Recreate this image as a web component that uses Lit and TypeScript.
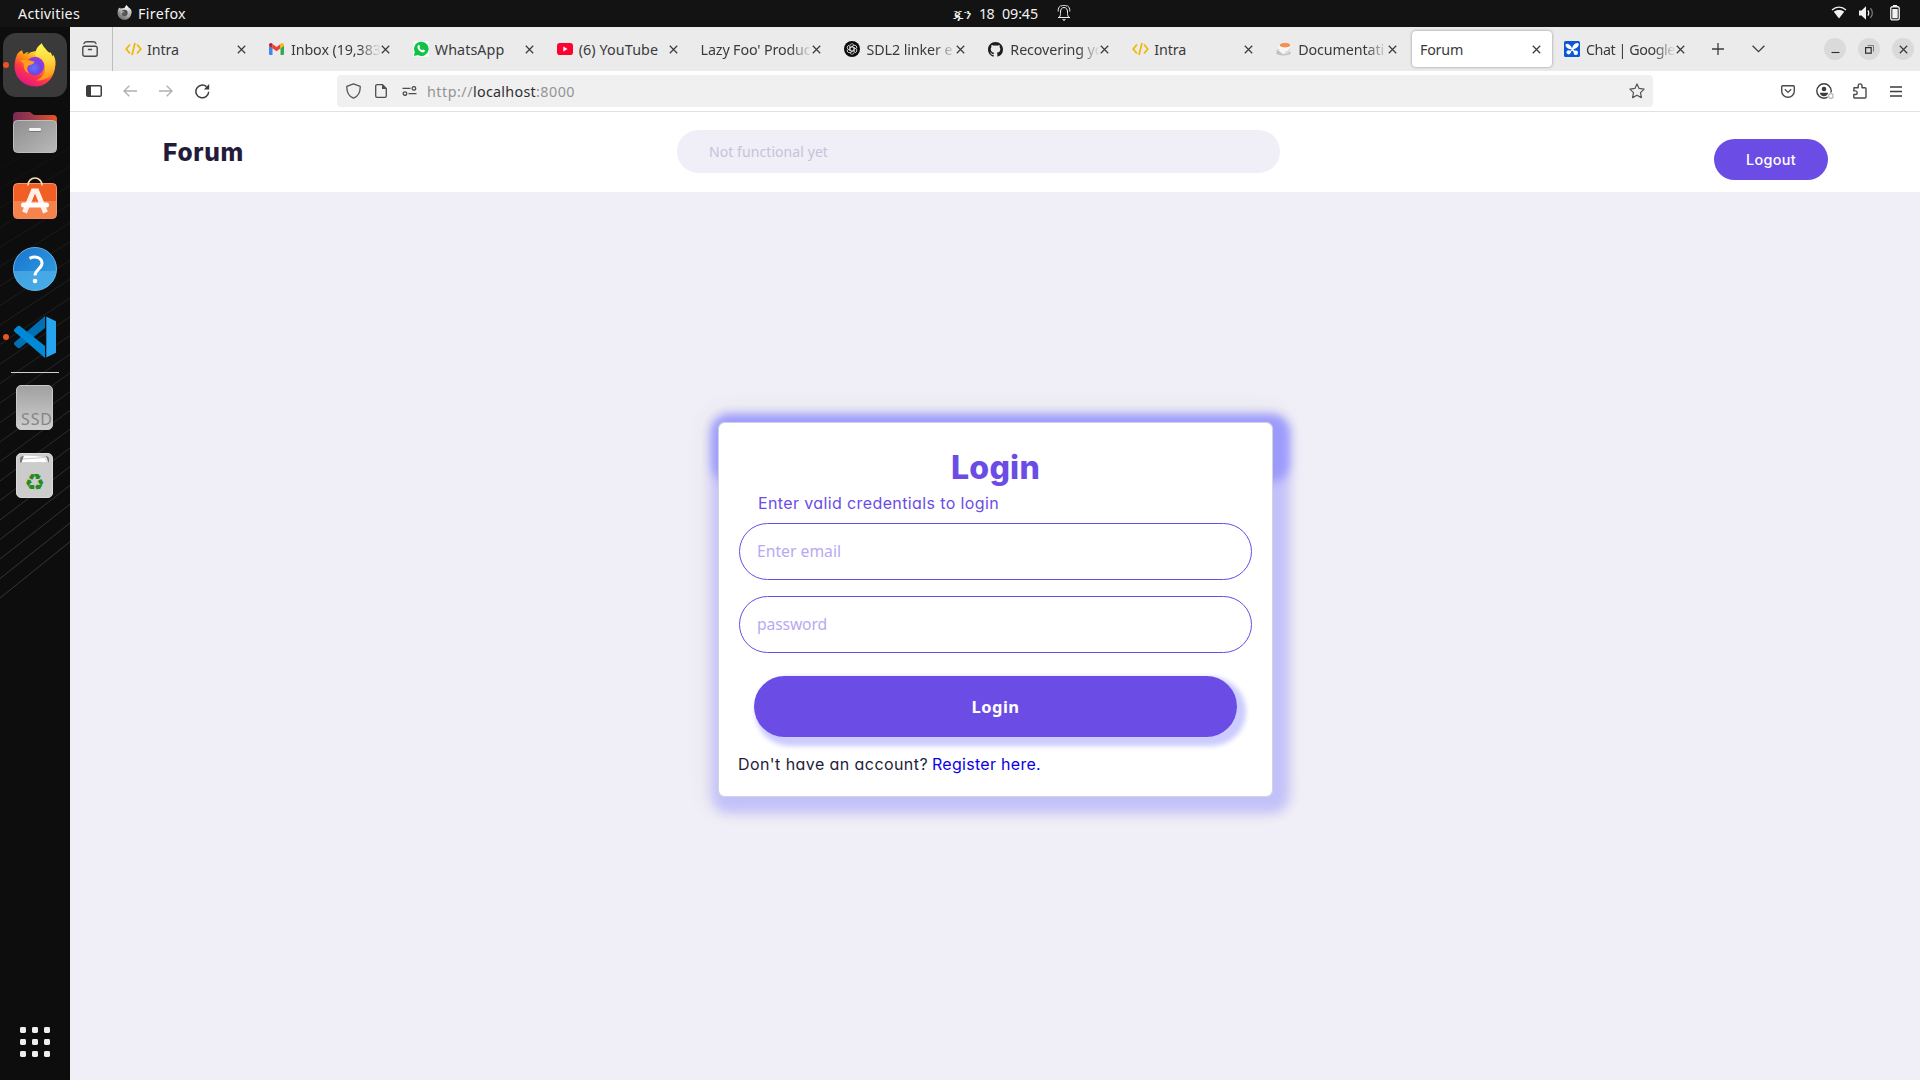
import { LitElement, html, svg, css, nothing } from "lit";
import { customElement, property } from "lit/decorators.js";

/** Inline text whose tracking is adjusted so that it fills a given width. */
@customElement("fit-text")
class FitText extends LitElement {
  static styles = css`
    :host { display: inline-block; white-space: pre; }
    .t { display: inline-block; }
  `;
  @property({ type: Number }) w = 0;
  @property() text = "";
  firstUpdated() {
    const el = this.renderRoot.querySelector<HTMLElement>(".t")!;
    const natural = el.getBoundingClientRect().width;
    const gap = (this.w - natural) / this.text.length;
    el.style.letterSpacing = `${gap.toFixed(3)}px`;
  }
  render() {
    return html`<span class="t">${this.text}</span>`;
  }
}

const foxShapes = (p: string, grey = false) => svg`
  <defs>
    <linearGradient id="${p}a" x1=".8" y1=".1" x2=".25" y2=".95">
      <stop offset="0" stop-color="${grey ? "#eee" : "#fff44f"}"/>
      <stop offset=".35" stop-color="${grey ? "#c4c4c4" : "#ff980e"}"/>
      <stop offset=".65" stop-color="${grey ? "#8c8c8c" : "#ff3647"}"/>
      <stop offset="1" stop-color="${grey ? "#777" : "#e31587"}"/>
    </linearGradient>
    <linearGradient id="${p}b" x1=".5" y1="0" x2=".6" y2="1">
      <stop offset="0" stop-color="${grey ? "#fff" : "#fff44f"}"/>
      <stop offset=".5" stop-color="${grey ? "#ccc" : "#ffd43c"}"/>
      <stop offset="1" stop-color="${grey ? "#999" : "#ff8a16"}"/>
    </linearGradient>
    <radialGradient id="${p}c" cx=".45" cy=".6" r=".6">
      <stop offset="0" stop-color="${grey ? "#666" : "#6173ff"}"/>
      <stop offset=".6" stop-color="${grey ? "#4c4c4c" : "#7542e5"}"/>
      <stop offset="1" stop-color="${grey ? "#555" : "#a238d8"}"/>
    </radialGradient>
  </defs>
  <path fill="url(#${p}a)" d="M2.300 13.500C3 10.500 5 8.500 8.200 7.200 8.500 9 9.200 10.500 9.800 11.200 11 10 12.500 9.300 14.600 9L12 13C14 10 20 7 26 9 31 5 38 10 40 16 44 28 36 43.500 21.500 43.500 9 43.500 .3 34 .6 23 .7 19 1.300 16 2.300 13.500Z"/>
  <path fill="url(#${p}b)" d="M27.800.3C22.500 4 20.500 9 22 13.500 28 15 32 20 31 27 30 33 26 36 22 37.500 33 38.500 41 31 41.500 21.500 41.800 18 41 14.500 39.300 11.800L38.400 14.300C38 12 37.300 10.200 36.300 9L35.500 11.500C33.500 7 29 4 27.800.3Z"/>
  <circle cx="21" cy="23" r="9.300" fill="url(#${p}c)"/>
  <path fill="${grey ? "#aaa" : "#ff9a1c"}" d="M6.500 17.500C10 15.800 15 17 20.500 18.500 19.800 21.500 16 22 14.800 22.500 12.500 24 13 28 15.500 30.500 11 29 9 25 10 21Z"/>
`;

const I = {
  fox: svg`<svg width="42" height="44" viewBox="0 0 42 44">${foxShapes("f")}</svg>`,
  foxGrey: svg`<svg width="15" height="15" viewBox="0 0 42 44">${foxShapes("g", true)}</svg>`,
  bell: svg`<svg width="14" height="16" viewBox="0 0 14 16" fill="none" stroke="#f2f2f2"><path d="M1 12.500h12M2.500 12c1-1.500 1-3 1-5 0-3 1.500-4.500 3.500-4.500s3.500 1.500 3.500 4.500c0 2 0 3.500 1 5M1.200 6.500C1 3.500 2 1.700 3.700.7M12.800 6.500C13 3.500 12 1.700 10.300.7M4 1.200C6-.1 8-.1 10 1.200"/><path d="M5 14.200h4L7 16z" fill="#f2f2f2" stroke="none"/></svg>`,
  wifi: svg`<svg width="16" height="13" viewBox="0 0 16 13"><path fill="none" stroke="#f2f2f2" stroke-width="1.200" d="M1 4C5 .2 11 .2 15 4"/><path fill="#f2f2f2" d="M2.800 5.800C5.500 3.300 10.500 3.300 13.200 5.800L8 12.500Z"/></svg>`,
  volume: svg`<svg width="15" height="14" viewBox="0 0 15 14"><path fill="#f2f2f2" d="M0 4.500h2.500L7 .3v13.400L2.500 9.500H0z"/><path fill="none" stroke="#f2f2f2" stroke-width="1.300" d="M8.800 4.500c1.200 1.200 1.200 3.800 0 5"/><path fill="none" stroke="#777" stroke-width="1.300" d="M11.400 2.200c2.600 2.600 2.600 7 0 9.600"/></svg>`,
  battery: svg`<svg width="10" height="16" viewBox="0 0 10 16"><path fill="#f2f2f2" d="M3 0h4v1.500H3z"/><rect x=".75" y="1.750" width="8.500" height="13.200" rx="1.800" fill="none" stroke="#f2f2f2" stroke-width="1.300"/><path fill="#f2f2f2" d="M2.300 4h5.400v9.300H2.300z"/></svg>`,
  archive: svg`<svg width="16" height="16" viewBox="0 0 16 16" fill="none" stroke="#4a4a4c" stroke-width="1.400" stroke-linecap="round"><rect x=".8" y="5.200" width="14.400" height="10" rx="1.800"/><path d="M2 2.600C2.600 1 3.400.8 5 .8h6c1.600 0 2.400.2 3 1.800M6.500 8.500h3"/></svg>`,
  close: svg`<svg width="9" height="9" viewBox="0 0 9 9"><path d="M.8.8l7.400 7.400M8.200.8L.8 8.200" stroke="#3c3c3e" stroke-width="1.250"/></svg>`,
  code: svg`<svg width="17" height="14" viewBox="0 0 17 14" fill="none" stroke="#f2b600" stroke-width="1.700"><path d="M5 2.500L1.200 7 5 11.500M12 2.500L15.800 7 12 11.500M10 1L7 13"/></svg>`,
  gmail: svg`<svg width="15" height="12" viewBox="0 0 15 12"><path fill="#4285f4" d="M0 2.500l3.500 2.600V12H1a1 1 0 0 1-1-1z"/><path fill="#34a853" d="M15 2.500l-3.500 2.600V12H14a1 1 0 0 0 1-1z"/><path fill="#ea4335" d="M3.500 1v4.300l4 3 4-3V1l-4 3z"/><path fill="#c5221f" d="M0 2c0-2 2-2.600 3.500-1.300v4.600L0 2.700z"/><path fill="#fbbc04" d="M15 2c0-2-2-2.600-3.500-1.300v4.600L15 2.700z"/></svg>`,
  whatsapp: svg`<svg width="16" height="16" viewBox="0 0 16 16"><path fill="#f8fff9" d="M0 0h16v16H0z" opacity=".7"/><path fill="#10c245" d="M8 .8A7 7 0 0 0 1.800 11L.9 15l4-1A7.100 7.100 0 1 0 8 .8z"/><path fill="#fff" d="M5.200 4.200c.5-.5 1-.4 1.200.1l.6 1.300c.2.500-.5.900-.5 1.200.4 1 1.500 2 2.700 2.500.4 0 .8-.9 1.200-.7l1.400.7c.4.300.2 1-.3 1.500-1.200 1.200-3.300.5-5-1-1.700-1.500-2.900-4-1.300-5.600z"/></svg>`,
  youtube: svg`<svg width="16" height="12" viewBox="0 0 16 12"><rect width="16" height="12" rx="2.800" fill="#ff0033"/><path fill="#fff" d="M6.300 3.600v4.800L10.500 6z"/></svg>`,
  chatgpt: svg`<svg width="16" height="16" viewBox="0 0 16 16"><circle cx="8" cy="8" r="8" fill="#0c0c0c"/><g fill="none" stroke="#dcdcdc" stroke-width=".85">${[0, 60, 120, 180, 240, 300].map((a) => svg`<path transform="rotate(${a} 8 8)" d="M8 5.700L10.100 6.900V10.600M5.900 6.900V4.500C6 2.800 8.500 2 9.800 3.700"/>`)}</g></svg>`,
  github: svg`<svg width="15" height="15" viewBox="0 0 16 16"><path fill="#1b1f24" d="M8 0C3.580 0 0 3.580 0 8c0 3.540 2.290 6.530 5.470 7.590.4.070.55-.17.55-.38 0-.19-.01-.82-.01-1.490-2.010.37-2.530-.49-2.690-.94-.09-.23-.48-.94-.82-1.130-.28-.15-.68-.52-.01-.53.63-.01 1.080.58 1.230.82.72 1.210 1.870.87 2.330.66.07-.52.28-.87.51-1.070-1.780-.2-3.640-.89-3.640-3.950 0-.87.31-1.590.82-2.150-.08-.2-.36-1.020.08-2.120 0 0 .67-.21 2.200.82.64-.18 1.320-.27 2-.27s1.360.09 2 .27c1.530-1.040 2.200-.82 2.200-.82.44 1.100.16 1.920.08 2.120.51.56.82 1.270.82 2.150 0 3.070-1.870 3.750-3.650 3.950.29.25.54.73.54 1.480 0 1.070-.01 1.930-.01 2.200 0 .21.15.46.55.38A8.010 8.010 0 0 0 16 8c0-4.420-3.580-8-8-8z"/></svg>`,
  cup: svg`<svg width="17" height="14" viewBox="0 0 17 14"><ellipse cx="7.500" cy="11" rx="7.500" ry="2.600" fill="#c4c4c7"/><path fill="#f6f6f6" d="M2.500 3.500h12c.3 5-2.500 8.500-6 8.500s-6.300-3.500-6-8.500z"/><path fill="#dcdce0" d="M9 12c3.500-.3 5.800-3.600 5.500-7.500-1 3-3 4.800-5.500 5.200z"/><ellipse cx="9" cy="3.300" rx="6.300" ry="2.900" fill="#fff"/><ellipse cx="9" cy="3.100" rx="5.500" ry="2.300" fill="#f0935a"/><path d="M3 7.500c-2 .2-2.500 2.300-.3 3" fill="none" stroke="#b0b0b4"/></svg>`,
  chat: svg`<svg width="16" height="16" viewBox="0 0 16 16"><rect width="16" height="16" rx="1.500" fill="#0b57d9"/><g fill="#fff"><path d="M8 8.500C4 8 1.500 6.500 1.500 3.800 3 1.200 7.200 4 8 7.500 8.800 4 12.500.2 14.800 2.800 15 6 12 8 8 8.500z"/><circle cx="4.600" cy="11.300" r="2.100"/><circle cx="11.800" cy="11.700" r="2.200"/><path d="M4 12L8.500 7.500l4 4-1 1L8 9.500 5 13z"/></g></svg>`,
  plus: svg`<svg width="12" height="12" viewBox="0 0 12 12"><path d="M6 0v12M0 6h12" stroke="#3c3c3e" stroke-width="1.300"/></svg>`,
  chevron: svg`<svg width="13" height="8" viewBox="0 0 13 8"><path d="M.6.8L6.500 6.600 12.400.8" fill="none" stroke="#3c3c3e" stroke-width="1.300"/></svg>`,
  min: svg`<svg width="9" height="9" viewBox="0 0 9 9"><path d="M.5 7.500h8" stroke="#2e2e2e" stroke-width="1.100"/></svg>`,
  restore: svg`<svg width="9" height="9" viewBox="0 0 9 9" fill="none" stroke="#2e2e2e"><rect x=".6" y="2.600" width="5.600" height="5.600" stroke-width="1.200"/><path d="M2.500.6h6v6" stroke="#777"/></svg>`,
  sidebar: svg`<svg width="16" height="12" viewBox="0 0 16 12"><rect x=".75" y=".75" width="14.500" height="10.500" rx="1.300" fill="none" stroke="#3c3c3e" stroke-width="1.500"/><path fill="#3c3c3e" d="M1 1h4v10H1z"/></svg>`,
  back: svg`<svg width="14" height="12" viewBox="0 0 14 12"><path d="M14 6H1M6.300.7L1 6l5.300 5.300" fill="none" stroke="#b0b0b0" stroke-width="1.350"/></svg>`,
  forward: svg`<svg width="14" height="12" viewBox="0 0 14 12"><path d="M0 6h13M7.700.7L13 6l-5.300 5.300" fill="none" stroke="#b0b0b0" stroke-width="1.350"/></svg>`,
  reload: svg`<svg width="15" height="15" viewBox="0 0 15 15"><path d="M13.700 7.800A6.400 6.400 0 1 1 11.500 2.600" fill="none" stroke="#3c3c3e" stroke-width="1.500"/><path d="M14.200 0v5.400H8.800z" fill="#3c3c3e"/></svg>`,
  shield: svg`<svg width="15" height="16" viewBox="0 0 15 16"><path d="M7.500.8L14.200 3.400C14.400 9 12 13.300 7.500 15.200 3 13.300.6 9 .8 3.400Z" fill="none" stroke="#555" stroke-width="1.300" stroke-linejoin="round"/></svg>`,
  page: svg`<svg width="12" height="14" viewBox="0 0 12 14"><path d="M7.500.7H2A1.300 1.300 0 0 0 .7 2v10A1.300 1.300 0 0 0 2 13.300h8a1.300 1.300 0 0 0 1.300-1.300V4.500z" fill="none" stroke="#4d4d4f" stroke-width="1.300"/><path d="M7 .5v4.500h4.600z" fill="#4d4d4f"/></svg>`,
  perms: svg`<svg width="15" height="10" viewBox="0 0 15 10" fill="none" stroke="#4d4d4f" stroke-width="1.300"><path d="M.5 2.400h8M6.500 7.600h8"/><circle cx="11.900" cy="2.400" r="1.800"/><circle cx="3" cy="7.600" r="1.800"/></svg>`,
  star: svg`<svg width="16" height="16" viewBox="0 0 16 16"><path d="M8 .9l2.100 4.500 5 .7-3.600 3.500.9 5L8 12.200l-4.400 2.400.9-5L.9 6.100l5-.7z" fill="none" stroke="#555" stroke-width="1.200" stroke-linejoin="round"/></svg>`,
  pocket: svg`<svg width="14" height="13" viewBox="0 0 14 13"><path d="M1.700.7h10.600a1 1 0 0 1 1 1V6A6.300 6.300 0 0 1 .7 6V1.700a1 1 0 0 1 1-1z" fill="none" stroke="#4a4a4c" stroke-width="1.400"/><path d="M3.800 4.300L7 7.400l3.200-3.100" fill="none" stroke="#4a4a4c" stroke-width="1.300"/></svg>`,
  account: svg`<svg width="18" height="17" viewBox="0 0 18 17"><circle cx="8" cy="8" r="7.200" fill="none" stroke="#3c3c3e" stroke-width="1.400"/><circle cx="8" cy="6" r="2.300" fill="#3c3c3e"/><path d="M3.800 9.800h8.400c-.3 2-2 3.500-4.200 3.500S4.100 11.800 3.800 9.800z" fill="#3c3c3e"/><circle cx="14.900" cy="13" r="3.600" fill="#fff"/><circle cx="14.900" cy="13" r="2.300" fill="none" stroke="#b5b5b5" stroke-width="1.200"/></svg>`,
  puzzle: svg`<svg width="14" height="16" viewBox="0 0 14 16"><path d="M1 4.700h4.200V2.800C5.200.2 9 .2 9 2.800v1.900h3a1 1 0 0 1 1 1V14a1 1 0 0 1-1 1H1.800a1 1 0 0 1-1-1v-2.500h1.700c2.300 0 2.300-3.600 0-3.600H.8z" fill="none" stroke="#4a4a4c" stroke-width="1.400" stroke-linejoin="round"/></svg>`,
  menu: svg`<svg width="12" height="11" viewBox="0 0 12 11"><path d="M0 1h12M0 5.500h12M0 10h12" stroke="#3c3c3e" stroke-width="1.300"/></svg>`,
  files: svg`<svg width="44" height="42" viewBox="0 0 44 42"><defs><linearGradient id="fl" x1="0" x2="1"><stop offset="0" stop-color="#782a55"/><stop offset=".45" stop-color="#a03a4a"/><stop offset="1" stop-color="#e95420"/></linearGradient><linearGradient id="fg" x1="0" y1="0" x2="1" y2="1"><stop offset="0" stop-color="#8e8e8e"/><stop offset="1" stop-color="#b9b9b9"/></linearGradient></defs><path fill="url(#fl)" d="M0 4a4 4 0 0 1 4-4h13l4 3h19a4 4 0 0 1 4 4v10H0z"/><rect x=".5" y="8.500" width="43" height="32" rx="4" fill="url(#fg)" stroke="#bdbdbd"/><rect x="16" y="16.500" width="12" height="3.500" rx="1.500" fill="#777"/><rect x="16" y="16" width="12" height="3" rx="1.300" fill="#f5f5f5"/></svg>`,
  store: svg`<svg width="44" height="42" viewBox="0 0 44 42"><rect x=".5" y="6.500" width="43" height="35" rx="4" fill="#f15f24" stroke="#f79468"/><path fill="#f5834e" d="M1 24h42v13.500a4 4 0 0 1-4 4H5a4 4 0 0 1-4-4z"/><path d="M15 8.500V8a7 7 0 0 1 14 0v.5" fill="none" stroke="#f5deb0" stroke-width="1.700"/><path d="M11.500 35.500L20.300 14h3.400l8.800 21.500" fill="none" stroke="#fff1ea" stroke-width="5"/><rect x="8" y="25.500" width="28" height="5" rx="2.500" fill="#fff"/></svg>`,
  help: svg`<svg width="44" height="44" viewBox="0 0 44 44"><defs><linearGradient id="hp" x1="0" y1="0" x2="1" y2="1"><stop offset="0" stop-color="#1873cf"/><stop offset="1" stop-color="#35a3e4"/></linearGradient></defs><circle cx="22" cy="22" r="21.500" fill="url(#hp)" stroke="#62b4ea"/><path d="M.7 24h42.600A21.400 21.400 0 0 1 .7 24z" fill="#55b4ea" opacity=".65"/><path d="M16.500 11.300c6-2.800 12.500-.8 12.500 5 0 5.500-7 6.200-7 12.200" fill="none" stroke="#fff" stroke-width="3"/><circle cx="22" cy="34" r="2.300" fill="#fff"/></svg>`,
  vscode: svg`<svg width="42" height="42" viewBox="0 0 42 42"><path fill="#0070b5" d="M31 0v12L6.500 31.500c-1.300.9-2.300.8-3.300-.1L.6 29c-.9-.9-.9-1.900 0-2.800z"/><path fill="#0089d6" d="M31 42V30L6.500 10.500c-1.300-.9-2.300-.8-3.300.1L.6 13c-.9.900-.9 1.900 0 2.800z"/><path fill="#25a4ef" d="M31 0l11 5.200v31.600L31 42c1 0 1.300-.8 1.300-2V2C32.300.8 32 0 31 0z"/></svg>`,
  ssd: svg`<svg width="37" height="45" viewBox="0 0 37 45"><defs><linearGradient id="sd" x2="0" y2="1"><stop offset="0" stop-color="#a0a0a0"/><stop offset="1" stop-color="#cfcfcf"/></linearGradient></defs><rect x=".5" y=".5" width="36" height="44" rx="4.500" fill="url(#sd)" stroke="#c9c9c9"/><text x="5" y="39.500" font-family="Noto Sans, sans-serif" font-size="16" textLength="31" fill="#858585">SSD</text></svg>`,
  trash: svg`<svg width="37" height="45" viewBox="0 0 37 45"><rect x=".5" y=".5" width="36" height="44" rx="4.500" fill="#cccccc" stroke="#dadada"/><path d="M4 9.500V6.500A3.500 3.500 0 0 1 7.500 3h22A3.500 3.500 0 0 1 33 6.500v3z" fill="#777"/><path d="M5.500 9.500L8 2.500l22 1 2.500 6z" fill="#fff"/><path d="M7 6l22-1.500L31.500 9" fill="none" stroke="#bbb" stroke-width=".8"/><text x="18.500" y="36.500" text-anchor="middle" font-family="DejaVu Sans, sans-serif" font-size="23" fill="#278a1c">♻</text></svg>`,
  apps: svg`<svg width="30" height="30" viewBox="0 0 30 30" fill="#f0efee">${[0, 12, 24].map((y) => [0, 12, 24].map((x) => svg`<rect x="${x}" y="${y}" width="6" height="6" rx="1.400"/>`))}</svg>`,
  rays: svg`<svg width="70" height="1053" viewBox="0 27 70 1053">${Array.from({ length: 24 }, (_, k) => svg`<path d="M0 ${598 - 19.5 * k}L70 ${541.7 - 18.75 * k}" stroke="#fff" stroke-width="1" opacity="${Math.max(0, 0.17 - 0.0068 * k).toFixed(3)}"/>`)}</svg>`,
};

const tabs: { icon?: unknown; title: string; w: number; fade?: boolean; active?: boolean }[] = [
  { icon: I.code, title: "Intra", w: 32 },
  { icon: I.gmail, title: "Inbox (19,383", w: 90, fade: true },
  { icon: I.whatsapp, title: "WhatsApp", w: 69.5 },
  { icon: I.youtube, title: "(6) YouTube", w: 79.5 },
  { title: "Lazy Foo' Produc", w: 110, fade: true },
  { icon: I.chatgpt, title: "SDL2 linker e", w: 86, fade: true },
  { icon: I.github, title: "Recovering yo", w: 93, fade: true },
  { icon: I.code, title: "Intra", w: 32 },
  { icon: I.cup, title: "Documentati", w: 86, fade: true },
  { title: "Forum", w: 43, active: true },
  { icon: I.chat, title: "Chat | Google", w: 89, fade: true },
];

@customElement("app-root")
class AppRoot extends LitElement {
  static styles = css`
    :host {
      display: grid;
      grid-template: 27px 1053px / 70px 1850px;
      width: 1920px;
      height: 1080px;
      overflow: hidden;
      font-family: "Noto Sans", "DejaVu Sans", sans-serif;
      font-size: 14.3px;
      line-height: 20px;
      color: #3a3a3c;
    }
    * { box-sizing: border-box; }
    svg { display: block; flex: none; }

    .topbar {
      grid-column: 1 / -1;
      display: grid;
      grid-template-columns: 953px 1fr auto;
      align-items: center;
      background: #131313;
      color: #f2f2f2;
    }
    .left, .clock, .status { display: flex; align-items: center; }
    .left { padding-left: 18px; }
    .app { display: flex; align-items: center; gap: 6px; padding-left: 37px; }
    .left svg { margin-top: -2px; }
    .clock { gap: 8px; }
    .clock .bell { padding: 0 0 2px 11px; }
    .status { gap: 12px; padding: 0 20px 2px 0; }
    .status svg:last-child { margin-left: 4px; }

    .dock {
      position: relative;
      background: #0d0d0d;
      display: flex;
      flex-direction: column;
      align-items: center;
      padding: 6px 0 20px;
      gap: 4px;
    }
    .rays { position: absolute; inset: 0; }
    .slot {
      position: relative;
      width: 64px;
      height: 64px;
      border-radius: 13px;
      display: grid;
      place-items: center;
    }
    .slot.on { background: #3a3a3a; }
    .slot.low { padding-bottom: 7px; }
    .dot {
      position: absolute;
      left: 0;
      top: 29px;
      width: 6px;
      height: 6px;
      border-radius: 50%;
      background: #e95420;
    }
    .rule { width: 48px; height: 1px; background: #d0d0d0; margin: -1px 0; position: relative; }
    .slot.drive { padding: 0 1px 1px 0; }
    .spring { flex: 1; }
    .apps { padding: 0 0 3px; }

    .window { display: flex; flex-direction: column; background: #f0eef7; }
    .tabbar { display: flex; height: 44px; background: #ebebeb; align-items: center; }
    .archive {
      width: 43px;
      height: 44px;
      padding-left: 12px;
      display: flex;
      align-items: center;
      border-right: 1px solid #bdbdbd;
    }
    .tabs { display: flex; width: 1584px; padding-left: 2px; }
    .tab {
      width: 143.9px;
      height: 36px;
      flex: none;
      padding: 0 2px;
    }
    .face {
      display: flex;
      align-items: center;
      height: 36px;
      padding: 0 11px 0 8px;
      border-radius: 4px;
    }
    .active .face { background: #fff; box-shadow: 0 0 3px rgba(0, 0, 0, 0.4); }
    .fav { width: 22px; flex: none; display: flex; align-items: center; }
    .title { flex: 1; min-width: 0; overflow: hidden; padding-top: 1px; height: 21px; }
    .title.fade {
      -webkit-mask-image: linear-gradient(to left, transparent, #000 22px);
      mask-image: linear-gradient(to left, transparent, #000 22px);
    }
    .after { display: flex; align-items: center; gap: 28px; padding-left: 15px; }
    .wins { display: flex; gap: 12px; margin-left: auto; padding-right: 6px; }
    .win {
      width: 22px;
      height: 22px;
      border-radius: 50%;
      background: #dadada;
      display: grid;
      place-items: center;
    }

    .toolbar {
      display: flex;
      align-items: center;
      height: 41px;
      background: #fff;
      border-bottom: 1px solid #e2e2e4;
      padding: 0 18px 0 16px;
    }
    .nav { display: flex; align-items: center; gap: 22px; width: 251px; }
    .nav svg:first-child { margin-right: -1px; }
    .urlbar {
      display: flex;
      align-items: center;
      width: 1316px;
      height: 32px;
      border-radius: 4px;
      background: #f0f0f0;
      padding: 0 8px 0 9px;
    }
    .urlbar .page { padding: 0 15px 0 14px; }
    .url { display: flex; padding-left: 10px; padding-top: 1px; color: #949496; flex: 1; }
    .host { color: #2f2f31; }
    .tools { display: flex; align-items: center; margin-left: auto; }
    .tools svg:nth-child(1) { margin-right: 21px; }
    .tools svg:nth-child(2) { margin-right: 19px; }
    .tools svg:nth-child(3) { margin-right: 23px; }

    .poppins { font-family: Inter, "Open Sans", sans-serif; font-feature-settings: "cv11", "ss03"; }
    .site {
      display: flex;
      align-items: flex-start;
      height: 80px;
      background: #fff;
      padding: 0 92px 0 93px;
    }
    .brand {
      width: 514px;
      padding-top: 24px;
      font-size: 24.5px;
      line-height: 32px;
      font-weight: 800;
      color: #241b3a;
    }
    .search {
      width: 603px;
      height: 43px;
      margin-top: 18px;
      border-radius: 22px;
      background: #f0eef7;
      color: #c7c2d9;
      padding: 12px 32px 0;
      font-size: 14px;
    }
    .logout {
      width: 114px;
      height: 41px;
      margin: 27px 0 0 auto;
      border-radius: 20.5px;
      background: #6b4de6;
      color: #fff;
      display: grid;
      place-items: center;
      font-size: 14.4px;
      font-weight: 500;
    }

    .body { flex: 1; padding-top: 230px; padding-left: 648px; }
    .card {
      position: relative;
      z-index: 0;
      width: 555px;
      height: 375px;
      border: 1px solid #d4d3dd;
      border-radius: 7px;
      background: #fff;
      padding: 22px 20px;
      color: #6b4de6;
    }
    .glow, .haze {
      position: absolute;
      z-index: -2;
      inset: -1px;
      border-radius: 7px;
      box-shadow: 5px 5px 11px 11px #c3c1fa, 0 0 24px 12px rgba(70, 60, 40, 0.06);
    }
    .haze { bottom: auto; height: 45px; box-shadow: 5px 4px 10px 11px #9c9bfc; }
    .paper { position: absolute; z-index: -1; inset: 0; border-radius: 6px; background: #fff; box-shadow: 0 0 0 1px #d4d3dd; }
    .heading { height: 45px; padding-top: 1px; text-align: center; font-size: 32px; line-height: 44px; font-weight: 800; }
    .hint { padding: 1px 0 0 19px; font-size: 16px; line-height: 24px; height: 33px; }
    .field {
      width: 513px;
      height: 57px;
      margin-bottom: 16px;
      border: 1px solid #6b4de6;
      border-radius: 28.5px;
      padding: 17px;
      font-size: 15.7px;
      color: #b9a9f3;
    }
    .submit {
      width: 483px;
      height: 61px;
      margin: 23px 0 15px 15px;
      border-radius: 30.5px;
      background: #6b4de6;
      box-shadow: 5px 5px 5px 4px #ccccff;
      color: #fff;
      font-size: 16.5px;
      font-weight: 700;
      display: grid;
      place-items: center;
    }
    .foot { display: flex; gap: 4px; margin-left: -1px; font-size: 16px; line-height: 24px; color: #241b3a; }
    .link { color: #0a00e6; }
  `;

  private fit(text: string, w: number) {
    return html`<fit-text .text=${text} .w=${w}></fit-text>`;
  }

  private tab(t: (typeof tabs)[number]) {
    return html`<div class="tab ${t.active ? "active" : ""}">
      <div class="face">
        ${t.icon ? html`<span class="fav">${t.icon}</span>` : nothing}
        <span class="title ${t.fade ? "fade" : ""}">${this.fit(t.title, t.w)}</span>
        ${I.close}
      </div>
    </div>`;
  }

  render() {
    return html`
      <header class="topbar">
        <div class="left">
          ${this.fit("Activities", 62)}
          <div class="app">${I.foxGrey}${this.fit("Firefox", 48)}</div>
        </div>
        <div class="clock">
          ${this.fit("ጁን", 18)}${this.fit("18", 15)}${this.fit("09:45", 36)}
          <span class="bell">${I.bell}</span>
        </div>
        <div class="status">${I.wifi}${I.volume}${I.battery}</div>
      </header>

      <nav class="dock">
        <div class="rays">${I.rays}</div>
        <div class="slot on"><span class="dot"></span>${I.fox}</div>
        <div class="slot">${I.files}</div>
        <div class="slot low">${I.store}</div>
        <div class="slot">${I.help}</div>
        <div class="slot"><span class="dot"></span>${I.vscode}</div>
        <div class="rule"></div>
        <div class="slot drive">${I.ssd}</div>
        <div class="slot drive">${I.trash}</div>
        <div class="spring"></div>
        <div class="apps">${I.apps}</div>
      </nav>

      <main class="window">
        <div class="tabbar">
          <div class="archive">${I.archive}</div>
          <div class="tabs">${tabs.map((t) => this.tab(t))}</div>
          <div class="after">${I.plus}${I.chevron}</div>
          <div class="wins">
            <span class="win">${I.min}</span><span class="win">${I.restore}</span><span class="win">${I.close}</span>
          </div>
        </div>
        <div class="toolbar">
          <div class="nav">${I.sidebar}${I.back}${I.forward}${I.reload}</div>
          <div class="urlbar">
            ${I.shield}<span class="page">${I.page}</span>${I.perms}
            <span class="url">${this.fit("http://", 46)}<span class="host">${this.fit("localhost", 63)}</span>${this.fit(":8000", 39)}</span>
            ${I.star}
          </div>
          <div class="tools">${I.pocket}${I.account}${I.puzzle}${I.menu}</div>
        </div>

        <div class="site">
          <div class="brand poppins">${this.fit("Forum", 81)}</div>
          <div class="search">${this.fit("Not functional yet", 119)}</div>
          <div class="logout poppins">${this.fit("Logout", 50)}</div>
        </div>

        <div class="body">
          <section class="card">
            <div class="glow"></div>
            <div class="haze"></div>
            <div class="paper"></div>
            <div class="heading poppins">${this.fit("Login", 89)}</div>
            <div class="hint poppins">${this.fit("Enter valid credentials to login", 241)}</div>
            <div class="field">${this.fit("Enter email", 84)}</div>
            <div class="field">${this.fit("password", 70)}</div>
            <div class="submit">${this.fit("Login", 48)}</div>
            <div class="foot poppins">${this.fit("Don't have an account?", 190)}<span class="link">${this.fit("Register here.", 109)}</span></div>
          </section>
        </div>
      </main>
    `;
  }
}
